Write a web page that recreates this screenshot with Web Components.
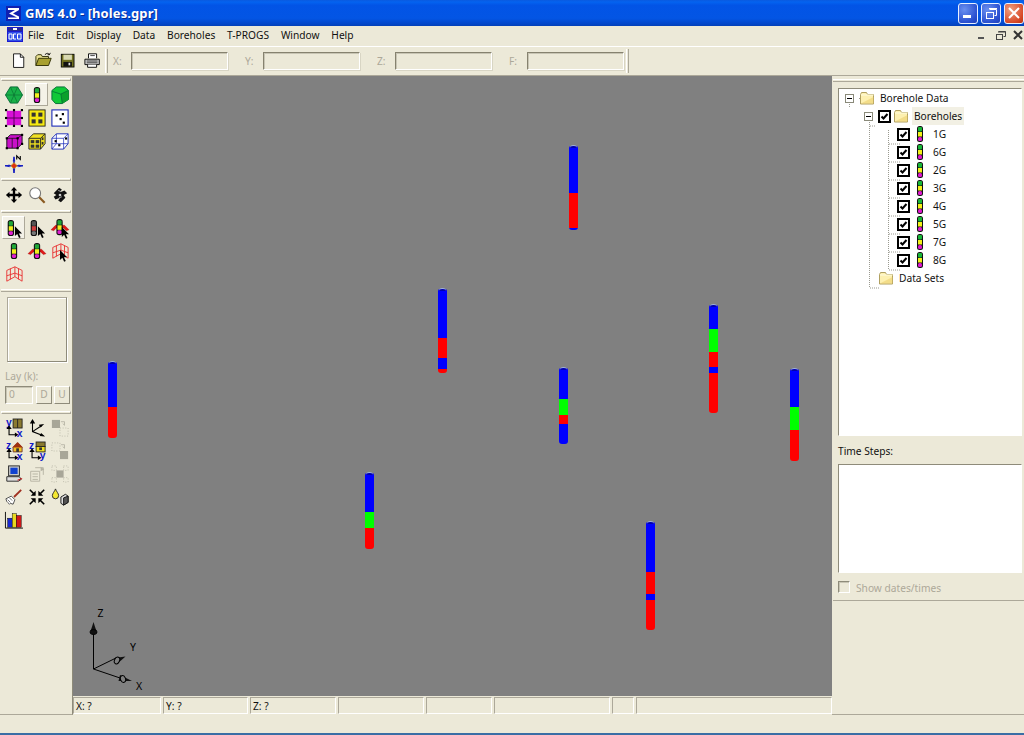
<!DOCTYPE html>
<html><head><meta charset="utf-8"><title>GMS 4.0</title>
<style>html,body{margin:0;padding:0;background:#ece9d8;width:1024px;height:735px;overflow:hidden}body{font:10.2px "Noto Sans",sans-serif}</style>
</head><body>
<gms-app>
 <gms-titlebar slot="title">GMS 4.0 - [holes.gpr]</gms-titlebar>
 <gms-menubar slot="menu">
  <span>File</span><span>Edit</span><span>Display</span><span>Data</span><span>Boreholes</span><span>T-PROGS</span><span>Window</span><span>Help</span>
 </gms-menubar>
 <gms-toolbar slot="toolbar"></gms-toolbar>
 <gms-leftpanel slot="left"></gms-leftpanel>
 <gms-view slot="view">
  <gms-borehole x="496" y="70" h="84" segs="blue:47,red:35,blue:2"></gms-borehole>
  <gms-borehole x="365" y="213" h="84" segs="blue:49,red:20,blue:11,red:4"></gms-borehole>
  <gms-borehole x="35" y="286" h="76" segs="blue:45,red:31"></gms-borehole>
  <gms-borehole x="486" y="292" h="76" segs="blue:31,green:16,red:9,blue:20"></gms-borehole>
  <gms-borehole x="636" y="229" h="108" segs="blue:24,green:23,red:15,blue:6,red:40"></gms-borehole>
  <gms-borehole x="717" y="293" h="92" segs="blue:38,green:23,red:31"></gms-borehole>
  <gms-borehole x="292" y="397" h="76" segs="blue:39,green:16,red:21"></gms-borehole>
  <gms-borehole x="573" y="446" h="108" segs="blue:50,red:22,blue:6,red:30"></gms-borehole>
  <gms-triad></gms-triad>
 </gms-view>
 <gms-statusbar slot="status">
  <gms-cell w="88">X: ?</gms-cell><gms-cell w="85">Y: ?</gms-cell><gms-cell w="86">Z: ?</gms-cell><gms-cell w="86"></gms-cell><gms-cell w="66"></gms-cell><gms-cell w="116"></gms-cell><gms-cell w="22"></gms-cell><gms-cell w="196"></gms-cell>
 </gms-statusbar>
 <gms-rightpanel slot="right"></gms-rightpanel>
</gms-app>
<script>
const UI='10.2px "Noto Sans",sans-serif';
const bhIcon=(x,y,gray)=>`<g transform="translate(${x},${y})"><rect x="0" y="0" width="7" height="18" rx="3" fill="#111"/><rect x="1.2" y="1.500" width="4.600" height="5" rx="1" fill="${gray?'#555':'#20a838'}"/><rect x="1.2" y="7" width="4.600" height="5" fill="${gray?'#d04040':'#f0f020'}"/><rect x="1.2" y="12.500" width="4.600" height="4.200" rx="1.500" fill="${gray?'#777':'#e020d0'}"/></g>`;
const arrow=(x,y)=>`<path transform="translate(${x},${y})" d="M0 0v11l2.600-2.400 2 4.400 1.800-.8-2-4.200h3.600z" fill="#000"/>`;
const wing=(y)=>`<path d="M0 ${y+4}L5 ${y-1}h10l5 5-3 1-3-3H6l-3 3z" fill="#e01818" stroke="#900" stroke-width=".4"/>`;
const fence=(x,y)=>`<g transform="translate(${x},${y})" fill="none" stroke="#e83030" stroke-width="1"><path d="M1 5l9-4 8 4v12l-8-5-9 5z"/><path d="M5 3v12M14 3v12M1 11l9-3 8 3M10 1v11"/></g>`;
const dots=(pts)=>pts.map(p=>`<rect x="${p[0]}" y="${p[1]}" width="2.400" height="2.400" fill="#000"/>`).join('');
const dotted=(x,y,s)=>`<rect x="${x}" y="${y}" width="${s}" height="${s}" fill="none" stroke="#b8b5a6" stroke-dasharray="1 2"/>`;
const L=(c,x,y)=>`<text x="${x}" y="${y}" font-size="11.500" font-weight="700" fill="#1018c8" font-family="Liberation Sans">${c}</text>`;
const ax=`<path d="M4.500 9v8.500H13" stroke="#000" stroke-width="1.200" fill="none"/><path d="M4.500 7l-3 4h6z" fill="#000"/><path d="M15 17.500l-4-2.500v5z" fill="#000"/>`;
const ICONS={
hex:`<path d="M6 1h8l5.500 9-5.500 9H6L.5 10z" fill="#18b048" stroke="#063" stroke-width="1"/><path d="M6 1l8 18M14 1L6 19M1 10h18" stroke="#0a6a30" stroke-width=".7"/>`,
bh:bhIcon(6.500,1),
solid:`<path d="M6 1h9l4.500 4v10l-7 4.500H5L1 15V5z" fill="#10c838" stroke="#063"/><path d="M11 9l8.500-4v10l-7 4.500z" fill="#0aa02c"/><path d="M1.500 6l9.500 3 8-4M11 9l1.500 10" stroke="#063" fill="none" stroke-width=".8"/>`,
mgrid:`<rect x="2" y="2" width="16" height="16" fill="#d810d8"/><path d="M10 2v16M2 10h16" stroke="#500050" stroke-width="1"/>${dots([[0,0],[8.800,0],[17.600,0],[0,8.800],[17.600,8.800],[0,17.600],[8.800,17.600],[17.600,17.600]])}`,
ygrid:`<rect x="1" y="1" width="18" height="18" fill="#f5e810" stroke="#222"/><rect x="4" y="4" width="4.500" height="4.500" fill="#333"/><rect x="11.500" y="4" width="4.500" height="4.500" fill="#333"/><rect x="4" y="11.500" width="4.500" height="4.500" fill="#333"/><rect x="11.500" y="11.500" width="4.500" height="4.500" fill="#333"/>`,
dgrid:`<rect x="1" y="1" width="18" height="18" fill="#fff" stroke="#1828b8" stroke-width="1.200"/>${dots([[5,6],[12,4.500],[9.500,10],[13,14]])}`,
m3d:`<path d="M2 7l4-4h13v10l-5 5H2z" fill="#c810c8" stroke="#111"/><path d="M2 7h12v11M14 7l5-4M8 7v11" stroke="#111" fill="none" stroke-width=".8"/>${dots([[0.800,5.800],[12.800,5.800],[0.800,16.800],[12.800,16.800],[17.800,2],[17.800,12]])}`,
y3d:`<path d="M1 7l5-5h13v11l-5 6H1z" fill="#f0e020" stroke="#222"/><path d="M1 7h13v12M14 7l5-5" stroke="#222" fill="none"/><rect x="3" y="9" width="4" height="3.500" fill="#333"/><rect x="8.500" y="9" width="4" height="3.500" fill="#333"/><rect x="3" y="14" width="4" height="3.500" fill="#333"/><rect x="8.500" y="14" width="4" height="3.500" fill="#333"/><rect x="15.200" y="6" width="2" height="3" fill="#333"/><rect x="15.200" y="11" width="2" height="3" fill="#333"/>`,
d3d:`<path d="M1 7l5-5h13v11l-5 6H1z" fill="#fff" stroke="#1828b8"/><path d="M1 7h13v12M14 7l5-5M6 2v11H1M6 13h13M6 13l-5 6" stroke="#1828b8" fill="none" stroke-width=".8"/>${dots([[4,9],[15.500,6],[8,13.500]])}`,
north:`<path d="M10 2v18M0 12h20" stroke="#1820c0" stroke-width="1.800"/><path d="M6.500 12L10 8.500l3.500 3.500L10 15.500z" fill="#e03010" stroke="#d0a020"/><path d="M0 12l5-1.500v3zM20 12l-5-1.500v3zM10 2L8.500 7h3zM10 20l-1.500-5h3z" fill="#1820c0"/><path d="M13 5V1l4 4V1" stroke="#000" fill="none" stroke-width="1.200"/>`,
move:`<path d="M10 1l3.500 4H11.300v3.700H15V6.500l4 3.500-4 3.500v-2.200h-3.700V15h2.200L10 19l-3.500-4h2.200v-3.700H5v2.200L1 10l4-3.500v2.200h3.700V5H6.500z" fill="#000"/>`,
zoom:`<circle cx="8" cy="8" r="6" fill="#fff" stroke="#777" stroke-width="1.200"/><path d="M12.500 12.500l6 6" stroke="#8a5a20" stroke-width="2.400"/>`,
rot:`<path d="M3 8l6-6 3 2-2 3 5-2 3 3-4 2 2 3-5 5-3-2 2-3-5 2-2-3 3-2z" fill="#111"/><path d="M8 5l3 1M12 12l-3 1" stroke="#bbb" fill="none"/><circle cx="10" cy="10" r="1.500" fill="#ccc"/>`,
bhsel:bhIcon(3,1)+arrow(11,8),
bhg:bhIcon(3,1,true)+arrow(11,8),
bhwa:wing(8)+bhIcon(6,0)+arrow(12,9),
bh2:bhIcon(6.500,1),
bhw:wing(9)+bhIcon(6.500,1),
fa:fence(1,1)+arrow(10,9),
f:fence(1,1),
yx:`${L('y',1,8)}<rect x="9" y="0" width="10" height="10" fill="#8a7a30" stroke="#222"/><path d="M14 0v10" stroke="#222"/>${ax}${L('x',13,20)}`,
axes:`<path d="M5 3v11l12 4.500M5 14l10-6.500" stroke="#000" fill="none" stroke-width="1.200"/><path d="M5 0l-3 5h6zM19 19.500l-6-.5 1.500-3.500zM18 5.500l-6 1 2 3z" fill="#000"/>`,
dis1:`<rect x="1" y="1" width="9" height="9" fill="#a8a698"/>${dotted(10,10,9)}<path d="M11 3h4v4M15 7l-2-2" stroke="#b8b5a6" fill="none"/>`,
zx:`${L('z',1,8)}<path d="M9 6l5-5 5 5v5H9z" fill="#f0c020" stroke="#633"/><path d="M8 6l6-6 6 6z" fill="#a03010"/><rect x="12.500" y="7" width="3" height="4" fill="#333"/>${ax}${L('x',13,20)}`,
zy:`${L('z',1,8)}<rect x="9" y="0" width="10" height="5" fill="#8a7a30" stroke="#222"/><rect x="9" y="5" width="10" height="6" fill="#f0e020" stroke="#222"/><rect x="12.500" y="6" width="3" height="3" fill="#333"/>${ax}${L('y',13,19)}`,
dis2:`${dotted(1,1,9)}<rect x="10" y="10" width="9" height="9" fill="#a8a698"/><path d="M11 3h4v4M15 7l-2-2" stroke="#b8b5a6" fill="none"/>`,
pc:`<rect x="4" y="1" width="12" height="11" fill="#c8c8c8" stroke="#222"/><rect x="6" y="3" width="8" height="7" fill="#1040d0"/><path d="M2 13h14l2 3-3 2H2z" fill="#ddd" stroke="#222"/><path d="M14 17l5-2" stroke="#d02020" stroke-width="1.200"/>`,
dis3:`<path d="M3 7h10v11H3z" fill="none" stroke="#b4b1a2"/><path d="M8 3h9v8M5 10h6M5 13h6M5 16h6" stroke="#b4b1a2" fill="none"/><path d="M14 2l4 3-4 2z" fill="#b4b1a2"/>`,
dis4:`${dotted(1,1,5)}${dotted(14,1,5)}${dotted(1,14,5)}${dotted(14,14,5)}<rect x="6" y="6" width="8" height="8" fill="#a8a698"/>`,
brush:`<path d="M1 12l6-3 4 4-2 5-3-1-1 1-2-2-1-1z" fill="#fff" stroke="#444"/><path d="M3 13l3 3M5 11l3 3" stroke="#666"/><path d="M10 10l8-8" stroke="#a03020" stroke-width="2"/>`,
shrink:`<path d="M2 2l5 5M18 2l-5 5M2 18l5-5M18 18l-5-5" stroke="#000" stroke-width="1.800"/><path d="M8.500 8.500V3L3 8.500zM11.500 8.500V3L17 8.500zM8.500 11.500V17L3 11.500zM11.500 11.500V17L17 11.500z" fill="#000"/>`,
drop:`<path d="M5 1c1 3 3.500 5 3.500 7.500a3.500 3.500 0 0 1-7 0C1.500 6 4 4 5 1z" fill="#f5e830" stroke="#222"/><path d="M11 10l5-3 3 2v7l-5 3-3-2z" fill="#ddd" stroke="#111"/><path d="M14 11v8l5-3V9z" fill="#555" stroke="#111"/>`,
chart:`<path d="M.5 1v18H20" stroke="#000" fill="none"/><rect x="3" y="8" width="5" height="10" fill="#1828d0" stroke="#000" stroke-width=".5"/><rect x="8" y="3" width="4.500" height="15" fill="#e8d820" stroke="#000" stroke-width=".5"/><rect x="12.500" y="5" width="5.500" height="13" fill="#d01818" stroke="#000" stroke-width=".5"/>`,
'new':`<path d="M3 1h8l4 4v12H3z" fill="#fff" stroke="#000"/><path d="M11 1v4h4" fill="none" stroke="#000"/>`,
open:`<path d="M1 15V5l2-2h4l1 2h7v2" fill="#e8e090" stroke="#2a2a00"/><path d="M1 15l3-8h14l-3 8z" fill="#a8a030" stroke="#2a2a00"/><path d="M11 3c2-2 4-2 5 0M16 3l1-2M16 3h-2" stroke="#000" fill="none"/>`,
save:`<rect x="1.500" y="1.500" width="15" height="15" fill="#707020" stroke="#000"/><rect x="4" y="2" width="10" height="6" fill="#d8d8b0"/><rect x="4" y="10.500" width="10" height="5.500" fill="#111"/><rect x="10" y="11.500" width="2" height="3" fill="#ddd"/>`,
print:`<path d="M5 7V2h9v5" fill="#fff" stroke="#000"/><path d="M1 8h16v6H1z" fill="#ccc" stroke="#000"/><path d="M4 14v3h10v-3" fill="#fff" stroke="#000"/><path d="M3 10h12M3 12h12M7 4h5" stroke="#333"/>`
};
function def(name,css,html){
 customElements.define(name,class extends HTMLElement{
  constructor(){super();this.attachShadow({mode:'open'})}
  connectedCallback(){
   const h=typeof html==='function'?html(this):html;
   this.shadowRoot.innerHTML=`<style>${css}</style>${h}`;
  }
 });
}
def('gms-app',`:host{display:grid;width:1024px;height:735px;grid-template-columns:73px 759px 192px;grid-template-rows:26px 20px 30px 620px 19px 20px;background:#ece9d8;color:#000}
 ::slotted([slot=title]),::slotted([slot=menu]),::slotted([slot=toolbar]){grid-column:1/-1}
 .bottom{grid-column:1/-1;grid-row:6;display:flex;flex-direction:column;justify-content:flex-end}
 .bottom i{display:block;height:2px;background:#3a6ea5}
 ::slotted([slot=left]){grid-row:4/6}
 ::slotted([slot=right]){grid-row:4/6;grid-column:3}
 ::slotted([slot=view]){grid-row:4;grid-column:2}
 ::slotted([slot=status]){grid-row:5;grid-column:2}`,
 `<slot name="title"></slot><slot name="menu"></slot><slot name="toolbar"></slot><slot name="left"></slot><slot name="view"></slot><slot name="status"></slot><slot name="right"></slot><div class="bottom"><i></i></div>`);
def('gms-titlebar',`:host{display:flex;align-items:center;height:26px;background:linear-gradient(#0a5ae0 0,#0463f0 8%,#0254e6 20%,#0355e4 70%,#0346c8 92%,#0340b8 100%);color:#fff;font:700 13px "Noto Sans",sans-serif}
 .i{width:15px;height:15px;margin:0 4px 0 6px;flex:none}
 .t{flex:1;text-shadow:1px 1px 0 #0a2a90;letter-spacing:.1px;padding-bottom:1px}
 .b{width:20px;height:21px;border:1px solid #e8f0ff;border-radius:3px;margin-left:3px;box-sizing:border-box;background:radial-gradient(circle at 30% 30%,#6a90f0,#2a50d0 70%,#2040b8);display:flex;align-items:center;justify-content:center}
 .b.x{background:radial-gradient(circle at 30% 30%,#f0a080,#d84a28 70%,#b83010)}
 svg{display:block}`,
 `<svg class="i" viewBox="0 0 15 15"><rect width="15" height="15" fill="#1020b0"/><path d="M2 2h11v2L7 7.500l6 3V13H2v-1.500h9L3 7.500 9 4H2z" fill="#fff"/></svg>
 <span class="t"><slot></slot></span>
 <span class="b"><svg width="14" height="14"><rect x="2" y="9" width="8" height="3" fill="#fff"/></svg></span>
 <span class="b"><svg width="14" height="14" fill="none" stroke="#fff"><path d="M5.500 3.500h7v6h-2"/><path d="M5 2.500h8"/><rect x="2.500" y="6.500" width="7" height="6"/></svg></span>
 <span class="b x"><svg width="14" height="14" stroke="#fff" stroke-width="2"><path d="M2 2l10 10M12 2L2 12"/></svg></span>`);
def('gms-menubar',`:host{display:flex;align-items:center;height:20px;box-sizing:border-box;padding-left:7px;background:#ece9d8;font:${UI};color:#111}
 .ic{width:16px;height:15px;margin-right:5px;flex:none;margin-top:-3px}
 .m{display:flex;gap:11.800px}
 ::slotted(span){display:block;padding-bottom:3px}
 .r{margin-left:auto;display:flex;gap:6px;align-items:center}
 .r svg{width:12px;height:16px;display:block}`,
 `<svg class="ic" viewBox="0 0 16 15"><rect width="16" height="15" fill="#1a1ad0"/><rect x="1" y="1" width="14" height="3" fill="#2a2a90"/><rect x="6" y="1" width="4" height="2" fill="#fff"/><rect x="1" y="5" width="14" height="9" fill="#3050e8"/><path d="M2 7h3v5H2zM6.500 7H9M6.500 7v5H9M10.500 7H14v5h-3.500z" fill="none" stroke="#fff"/></svg>
 <div class="m"><slot></slot></div>
 <div class="r"><svg><rect x="2" y="9" width="6" height="2" fill="#555"/></svg><svg fill="none" stroke="#444"><path d="M4.500 3.500h7v5h-2"/><path d="M4 4h8"/><rect x="2.500" y="6.500" width="6" height="5"/></svg><svg stroke="#333" stroke-width="2"><path d="M2 3l8 8M10 3l-8 8"/></svg></div>`);
def('gms-icon',`:host{display:inline-flex;align-items:center;justify-content:center}svg{display:block;overflow:visible}`,
 e=>{const s=+(e.getAttribute('s')||18);return `<svg width="${s}" height="${s}" viewBox="0 0 20 20">${ICONS[e.getAttribute('name')]||''}</svg>`});
def('gms-field',`:host{display:flex;align-items:center;color:#aca899;font:${UI}}
 .l{width:18px;box-sizing:border-box;padding-bottom:1px}
 .f{width:97px;height:18px;box-sizing:border-box;border:1px solid;border-color:#86826f #fff #fff #86826f;background:#ece9d8;box-shadow:inset 1px 1px 0 #c8c5b4, 1px 1px 0 #d8d5c4}`,
 e=>`<span class="l">${e.getAttribute('label')}</span><div class="f"></div>`);
def('gms-toolbar',`:host{display:flex;align-items:center;height:30px;box-sizing:border-box;border-top:1px solid #fff;border-bottom:1px solid #aca899;background:#ece9d8}
 .g{display:flex;align-items:center;gap:7px;margin-left:11px}
 .sep{width:3px;height:24px;border-left:1px solid #fff;border-right:1px solid #aca899;box-sizing:border-box;margin:0 5px 0 3px;flex:none}
 .sep.e{margin:0 0 0 2px}
 .g2{display:flex;gap:17px;align-items:center}`,
 `<div class="g"><gms-icon name="new" s="17"></gms-icon><gms-icon name="open" s="18"></gms-icon><gms-icon name="save" s="17"></gms-icon><gms-icon name="print" s="18"></gms-icon></div>
 <div class="sep"></div>
 <div class="g2"><gms-field label="X:"></gms-field><gms-field label="Y:"></gms-field><gms-field label="Z:"></gms-field><gms-field label="F:"></gms-field></div><div class="sep e"></div>`);
def('gms-toolgroup',`:host{display:block;position:relative;box-sizing:border-box;padding:var(--pt,8px) 0 0 2px;height:var(--h)}
 .grip{position:absolute;left:1px;right:1px;top:var(--gt,2px);height:3px;box-sizing:border-box;border-top:1px solid #fff;border-bottom:1px solid #aca899;border-right:1px solid #aca899;border-left:1px solid #fff}
 .grid{display:grid;grid-template-columns:repeat(3,23px);grid-auto-rows:23px}`,
 `<div class="grip"></div><div class="grid"><slot></slot></div>`);
def('gms-tool',`:host{display:flex;align-items:center;justify-content:center;box-sizing:border-box}
 :host([sel]){border:1px solid;border-color:#fff #aca899 #aca899 #fff;background:#f4f2e8}`,
 e=>`<gms-icon name="${e.getAttribute('name')}"></gms-icon>`);
def('gms-layer',`:host{display:block;height:123px;box-sizing:border-box;position:relative;font:${UI};color:#aca899}
 .grip{position:absolute;left:1px;right:1px;top:2px;height:3px;box-sizing:border-box;border-top:1px solid #fff;border-bottom:1px solid #aca899}
 .wrap{display:flex;flex-direction:column;padding:10px 0 0 5px}
 .box{margin-left:2px;width:60px;height:65px;box-sizing:border-box;border:1px solid;border-color:#aca899 #8e8b7a #8e8b7a #aca899;box-shadow:1px 1px 0 #fff,inset 1px 1px 0 #fff}
 .lab{margin-top:7px;height:17px;line-height:15px}
 .row{display:flex;gap:3px;align-items:stretch;height:18px}
 .in{width:28px;box-sizing:border-box;border:1px solid;border-color:#8e8b7a #fff #fff #8e8b7a;padding-left:3px;line-height:14px;box-shadow:inset 1px 1px 0 #c8c5b4}
 .bt{width:16px;box-sizing:border-box;border:1px solid;border-color:#fff #8e8b7a #8e8b7a #fff;text-align:center;line-height:15px}`,
 `<div class="grip"></div><div class="wrap"><div class="box"></div><div class="lab">Lay (k):</div><div class="row"><div class="in">0</div><div class="bt">D</div><div class="bt" style="margin-left:-1px">U</div></div></div>`);
def('gms-leftpanel',`:host{display:flex;flex-direction:column;box-sizing:border-box;border-right:1px solid #8e8b7a;border-bottom:1px solid #aca899;background:#ece9d8;height:639px;width:73px}`,
 ()=>{const t=(n,s)=>`<gms-tool name="${n}"${s?' sel':''}></gms-tool>`;
 return `<gms-toolgroup style="--h:102px;--pt:7px;--gt:2px">${t('hex')+t('bh',1)+t('solid')+t('mgrid')+t('ygrid')+t('dgrid')+t('m3d')+t('y3d')+t('d3d')+t('north')}</gms-toolgroup>
 <gms-toolgroup style="--h:31px;--pt:5px;--gt:0">${t('move')+t('zoom')+t('rot')}</gms-toolgroup>
 <gms-toolgroup style="--h:78px;--pt:7px;--gt:1px">${t('bhsel',1)+t('bhg')+t('bhwa')+t('bh2')+t('bhw')+t('fa')+t('f')}</gms-toolgroup>
 <gms-layer></gms-layer>
 <gms-toolgroup style="--h:120px;--pt:6px;--gt:1px">${t('yx')+t('axes')+t('dis1')+t('zx')+t('zy')+t('dis2')+t('pc')+t('dis3')+t('dis4')+t('brush')+t('shrink')+t('drop')+t('chart')}</gms-toolgroup>`});
def('gms-view',`:host{display:block;position:relative;background:#808080;overflow:hidden}`,`<slot></slot>`);
def('gms-borehole',`:host{position:absolute;display:block;width:9px}
 .cap{position:absolute;left:1px;right:1px;top:-1px;height:3px;background:#0000b0;border-radius:3px 3px 0 0;border-top:1px solid #a0b0d8;box-sizing:border-box}
 .s{display:flex;flex-direction:column;height:100%;border-radius:2px 2px 3px 3px;overflow:hidden}
 .s i{display:block}`,
 e=>{const segs=e.getAttribute('segs').split(',').map(p=>p.split(':'));
  e.style.left=e.getAttribute('x')+'px';e.style.top=e.getAttribute('y')+'px';e.style.height=e.getAttribute('h')+'px';
  const col={blue:'#0000ff',red:'#ff0000',green:'#00ff00'};
  return `<div class="cap"></div><div class="s">${segs.map(s=>`<i style="height:${s[1]}px;background:${col[s[0]]}"></i>`).join('')}</div>`});
def('gms-triad',`:host{position:absolute;left:0;top:520px;display:block;width:90px;height:100px}svg{display:block}text{font:10.500px "Noto Sans",sans-serif;fill:#000}`,
 `<svg width="90" height="100" viewBox="0 0 90 100"><path d="M20.500 73V30M20.500 73L44 61.500M20.500 73L50 83" stroke="#000" fill="none"/>
 <path d="M20.500 26l-3.500 11 3.500 2 3.500-2z" fill="#111"/><ellipse cx="20.500" cy="36" rx="3.500" ry="2.500" fill="none" stroke="#000"/>
 <path d="M52.500 60.500L41.500 62l2.500 6z" fill="#111"/><ellipse cx="44" cy="64.500" rx="2.500" ry="3.500" transform="rotate(25 44 64.500)" fill="#808080" stroke="#000"/>
 <path d="M59 85l-12-6-1.500 6z" fill="#111"/><ellipse cx="50" cy="83" rx="2.500" ry="3.500" transform="rotate(-20 50 83)" fill="#808080" stroke="#000"/>
 <text x="24.500" y="21">Z</text><text x="57" y="55">Y</text><text x="63" y="94">X</text></svg>`);
def('gms-statusbar',`:host{display:flex;height:19px;box-sizing:border-box;padding:1px 0;gap:2px;background:#ece9d8}`,`<slot></slot>`);
def('gms-cell',`:host{display:block;box-sizing:border-box;height:17px;border:1px solid;border-color:#aca899 #fff #fff #aca899;background:#ece9d8;font:${UI};color:#111;line-height:17px;padding-left:2px;white-space:nowrap;overflow:hidden}`,
 e=>{e.style.width=e.getAttribute('w')+'px';return `<slot></slot>`});
def('gms-folder',`:host{display:block;width:16px;height:14px}svg{display:block}`,
 `<svg width="16" height="14"><path d="M1.500 3.500l1-2h5l1 2h6v9.500h-13z" fill="#fdf0b0" stroke="#b0a060"/><path d="M2 12.500h12.500V6z" fill="#ecd070" opacity=".6"/><path d="M2 4h12.500" stroke="#fffce0"/></svg>`);
def('gms-check',`:host{display:block;width:13px;height:13px;flex:none}svg{display:block}`,
 `<svg width="13" height="13"><rect x="1" y="1" width="11" height="11" fill="#fff" stroke="#000" stroke-width="2"/><path d="M3.500 6.500l2 2 4-4.500" fill="none" stroke="#000" stroke-width="2"/></svg>`);
def('gms-expander',`:host{display:block;width:9px;height:9px;flex:none;box-sizing:border-box;border:1px solid #8a8a7a;background:#fff;position:relative}
 i{position:absolute;left:1px;top:3px;width:5px;height:1px;background:#000}`,`<i></i>`);
def('gms-treerow',`:host{display:flex;align-items:center;height:18px;position:relative;color:#111;font:${UI};padding-left:var(--in,0)}
 .t{white-space:nowrap;padding:3px 2px 2px;margin-left:var(--tm,3px);background:var(--tb,transparent);line-height:13px}
 .bh{display:block;margin-left:7px;margin-right:7px}`,
 e=>{const k=e.getAttribute('kind');
 if(k==='root')return `<gms-expander style="margin-right:5px"></gms-expander><gms-folder></gms-folder><span class="t">${e.getAttribute('t')}</span>`;
 if(k==='group')return `<gms-expander style="margin-right:5px"></gms-expander><gms-check></gms-check><gms-folder style="margin-left:2px"></gms-folder><span class="t" style="--tb:#f2f0e4">${e.getAttribute('t')}</span>`;
 if(k==='leaf')return `<gms-check></gms-check><svg class="bh" width="6" height="16" viewBox="0 0 6 16"><rect width="6" height="16" rx="2.500" fill="#111"/><rect x="1" y="1" width="4" height="4.500" rx="1" fill="#18b838"/><rect x="1" y="6" width="4" height="4.500" fill="#f4f018"/><rect x="1" y="11" width="4" height="4" rx="1.500" fill="#e018d0"/></svg><span class="t" style="--tm:0;padding-left:3px">${e.getAttribute('t')}</span>`;
 return `<gms-folder></gms-folder><span class="t">${e.getAttribute('t')}</span>`});
def('gms-rightpanel',`:host{display:flex;flex-direction:column;box-sizing:border-box;background:#ece9d8;border-bottom:1px solid #aca899;padding-left:6px;position:relative;font:${UI};height:639px}
 .grip{position:absolute;left:1px;right:0;top:3px;height:3px;box-sizing:border-box;border-top:1px solid #fff;border-bottom:1px solid #aca899}
 .tree{margin-top:12px;height:348px;box-sizing:border-box;border:1px solid;border-color:#8e8b7a #fff #fff #8e8b7a;margin-right:2px;background:#fff;position:relative;overflow:hidden}
 .rows{padding:0 0 0 6px;position:relative}
 .lines{position:absolute;left:10px;top:9px}
 .lbl{margin-top:8px;height:20px;line-height:14px;color:#111}
 .list{height:109px;box-sizing:border-box;border:1px solid;border-color:#8e8b7a #fff #fff #8e8b7a;margin-right:2px;background:#fff}
 .show{display:flex;align-items:center;margin-top:7px;color:#aca899;gap:6px;height:14px}
 .show span{padding-top:2px}
 .cb{width:12px;height:12px;box-sizing:border-box;border:1px solid;border-color:#8e8b7a #fff #fff #8e8b7a;box-shadow:inset 1px 1px 0 #c8c5b4}
 .rule{position:absolute;left:1px;right:0;top:524px;height:1px;background:#aca899}`,
 ()=>{const rows=['1G','6G','2G','3G','4G','5G','7G','8G'].map(t=>`<gms-treerow kind="leaf" t="${t}" style="--in:52px"></gms-treerow>`).join('');
 return `<div class="grip"></div><div class="tree">
 <svg class="lines" width="70" height="200" fill="none" stroke="#9a9a90" stroke-dasharray="1 1"><path d="M0.500 0V10M10 0.500h5M20.500 14V190M21 28h5M39.500 32V172M40 46h12M40 64h12M40 82h12M40 100h12M40 118h12M40 136h12M40 154h12M40 172h12M21 190h10"/></svg>
 <div class="rows"><gms-treerow kind="root" t="Borehole Data"></gms-treerow><gms-treerow kind="group" t="Boreholes" style="--in:19px"></gms-treerow>${rows}<gms-treerow kind="data" t="Data Sets" style="--in:33px"></gms-treerow></div></div>
 <div class="lbl">Time Steps:</div><div class="list"></div>
 <div class="show"><div class="cb"></div><span>Show dates/times</span></div><div class="rule"></div>`});
</script>
</body></html>
